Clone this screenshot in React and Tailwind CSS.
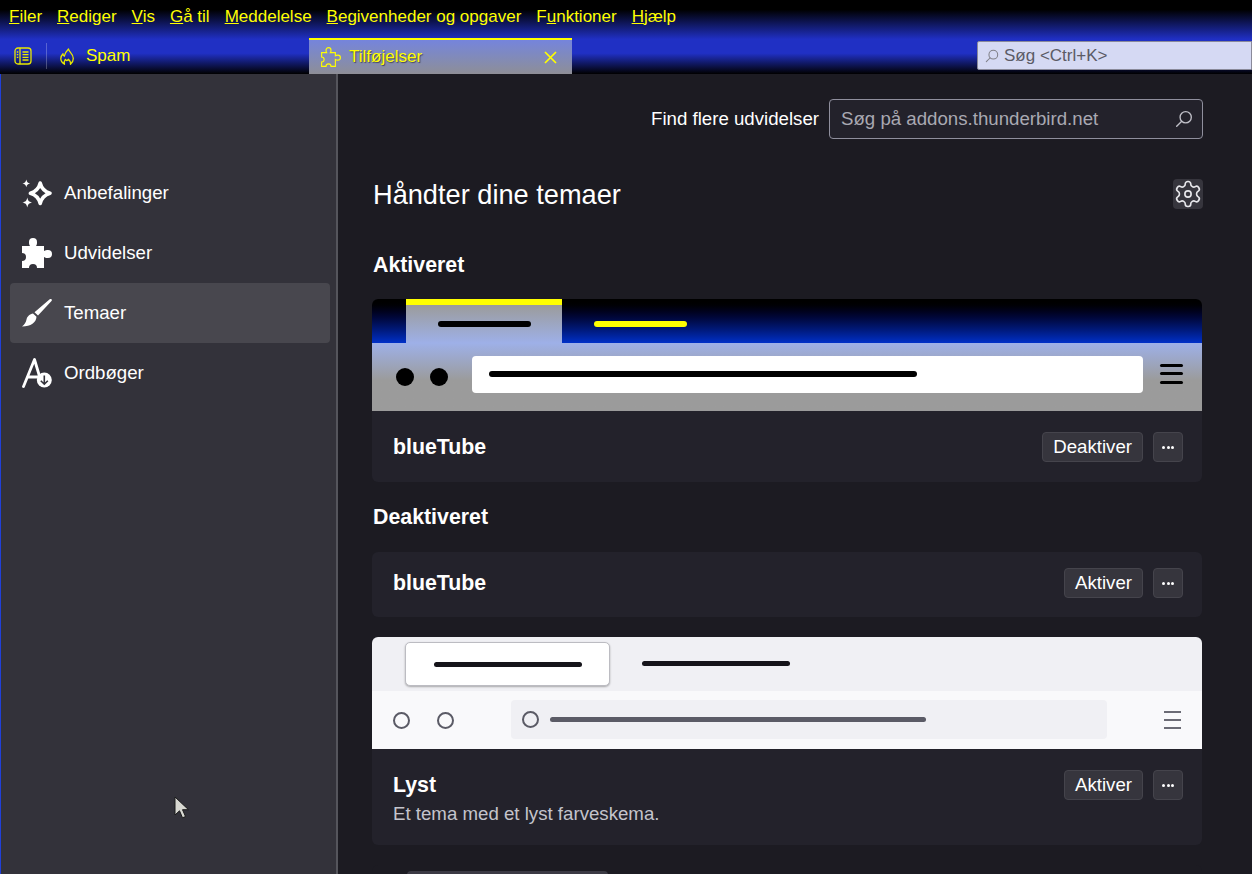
import React from "react";

// shared outline, 30x30 box
const PUZZLE =
  "M0 8H8C7 6.500 7 5.500 7 4A4 4 0 0 1 15 4C15 5.500 15 6.500 14 8H22V13C23.500 12 24.500 12 26 12A4 4 0 0 1 26 20C24.500 20 23.500 20 22 19V30H15A4 4 0 0 0 7 30H0V23A4 4 0 0 0 0 15Z";

const SearchIcon = ({ className }) => (
  <svg viewBox="0 0 16 16" fill="none" stroke="currentColor" strokeWidth="1.200" className={className}>
    <circle cx="9.500" cy="6.500" r="5" />
    <path d="M6 10 1.500 14.500" strokeLinecap="round" />
  </svg>
);

const SidebarToggle = () => (
  <svg viewBox="0 0 18 18" fill="none" stroke="#e8e800" strokeWidth="1.300" className="w-[18px] h-[18px]">
    <rect x="1" y="1" width="16" height="16" rx="3" />
    <path d="M6 1v16M8.500 5h6M8.500 7.700h6M8.500 10.400h6M8.500 13h6M2.800 5h1.500M2.800 7.700h1.500M2.800 10.400h1.500" />
  </svg>
);

const Flame = () => (
  <svg viewBox="0 0 14 18" fill="none" stroke="#e8e800" strokeWidth="1.300" strokeLinejoin="round" className="w-[14px] h-[18px] mt-[2px]">
    <path d="M8.500 1c0 2.500 4.800 4.500 4.800 9.500 0 2.300-.9 4.200-2.800 5.800.4-1.800-.2-3.300-2.200-5-.3 1-.9 1.200-1.500 1.200-.8 0-1.200-.5-1.500-1.200-1 1.300-1.400 3.100-.8 5C2.500 15 .8 13 .8 10.500.8 8 2 6.800 3 5.800c0 1.200.5 2 1.300 2.400C4.800 5.500 6.500 3 8.500 1z" />
  </svg>
);

const Sparkle = () => (
  <svg viewBox="0 0 30 30" className="w-[30px] h-[30px]" fill="none" stroke="white">
    <path
      d="M18.200 5c1.400 5.700 3.900 8.500 9.800 10.200-5.900 1.700-8.400 4.500-9.800 10.300-1.400-5.800-3.900-8.600-9.800-10.300C14.300 13.500 16.800 10.700 18.200 5z"
      strokeWidth="3.500"
      strokeLinejoin="round"
    />
    <path d="M4.300 1.500c.5 2.500 1.300 3.300 3.800 3.900-2.500.6-3.300 1.400-3.800 3.900C3.800 6.800 3 6 .5 5.400 3 4.800 3.800 4 4.300 1.500z" fill="white" stroke="none" />
    <path d="M5.300 19.500c.6 3.200 1.600 4.200 4.900 5-3.300.8-4.300 1.800-4.900 5-.6-3.200-1.600-4.200-4.900-5 3.300-.8 4.300-1.800 4.900-5z" fill="white" stroke="none" />
  </svg>
);

const PuzzleFill = () => (
  <svg viewBox="0 0 30 30" className="w-[30px] h-[30px]" fill="white">
    <path d={PUZZLE} />
  </svg>
);

const Brush = () => (
  <svg viewBox="0 0 30 30" className="w-[30px] h-[30px]" fill="white">
    <path d="M29.500 1.200c.6.500.5 1.300 0 1.900L16 17.500l-3.500-3.300L27.700 1.300c.5-.4 1.300-.5 1.800-.1z" />
    <path d="M11 15.500l3.500 3.300c-.3 5.700-5.500 9.700-14.500 9.700 2.500-1.700 4-4.500 4.500-7 .5-3 3.500-5.500 6.500-6z" />
  </svg>
);

const DictIcon = () => (
  <svg viewBox="0 0 30 30" className="w-[30px] h-[30px]">
    <path d="M1.500 28.500 12.500 1.500 18 20M6 19h11" fill="none" stroke="white" strokeWidth="2.800" strokeLinecap="round" strokeLinejoin="round" />
    <circle cx="22.300" cy="22" r="7.500" fill="white" />
    <path d="M22.300 17.500v8.500M18.800 22.700l3.500 3.500 3.500-3.500" fill="none" stroke="#33323a" strokeWidth="1.600" />
  </svg>
);

const Gear = () => (
  <svg viewBox="0 0 24 24" fill="none" stroke="#e8e8ec" strokeWidth="1.300" className="w-[30px] h-[30px]">
    <path d="M12.220 2h-.440a2 2 0 0 0-2 2v.180a2 2 0 0 1-1 1.730l-.430.250a2 2 0 0 1-2 0l-.150-.080a2 2 0 0 0-2.730.730l-.220.380a2 2 0 0 0 .730 2.730l.150.100a2 2 0 0 1 1 1.720v.510a2 2 0 0 1-1 1.740l-.150.090a2 2 0 0 0-.730 2.730l.220.380a2 2 0 0 0 2.730.730l.150-.080a2 2 0 0 1 2 0l.430.250a2 2 0 0 1 1 1.730V20a2 2 0 0 0 2 2h.440a2 2 0 0 0 2-2v-.180a2 2 0 0 1 1-1.730l.430-.250a2 2 0 0 1 2 0l.150.080a2 2 0 0 0 2.730-.730l.220-.390a2 2 0 0 0-.730-2.730l-.150-.080a2 2 0 0 1-1-1.740v-.500a2 2 0 0 1 1-1.740l.150-.090a2 2 0 0 0 .730-2.730l-.220-.380a2 2 0 0 0-2.730-.730l-.150.080a2 2 0 0 1-2 0l-.430-.250a2 2 0 0 1-1-1.730V4a2 2 0 0 0-2-2z" />
    <circle cx="12" cy="12" r="2.500" />
  </svg>
);

const MENU = [
  ["F", "iler"],
  ["R", "ediger"],
  ["V", "is"],
  ["G", "å til"],
  ["M", "eddelelse"],
  ["B", "egivenheder og opgaver"],
  ["", "F", "u", "nktioner"],
  ["H", "jælp"],
];

const NAV = [
  { label: "Anbefalinger", icon: <Sparkle /> },
  { label: "Udvidelser", icon: <PuzzleFill /> },
  { label: "Temaer", icon: <Brush />, active: true },
  { label: "Ordbøger", icon: <DictIcon /> },
];

const MenuBar = () => (
  <div className="h-[33px] flex items-center pl-[9px] gap-[15px] text-[17px] text-[#ffff00]">
    {MENU.map((m) =>
      m[0] === "" ? (
        <span key="funktioner">
          {m[1]}
          <u>{m[2]}</u>
          {m[3]}
        </span>
      ) : (
        <span key={m[1]}>
          <u>{m[0]}</u>
          {m[1]}
        </span>
      )
    )}
  </div>
);

const TabBar = () => (
  <div className="h-[41px] flex text-[#ffff00] text-[17px]">
    <div className="w-[47px] h-[26px] mt-[10px] flex items-center justify-center pr-[1px] border-r border-[#ffffff40]">
      <SidebarToggle />
    </div>
    <div className="w-[262px] flex items-center pl-[13px] gap-[12px] pt-[4px]">
      <Flame />
      <span>Spam</span>
    </div>
    <div className="w-[263px] h-[36px] mt-[5px] flex items-center pl-[12px] pr-[15px] border-t-2 border-[#ffff00] bg-gradient-to-b from-[#7584dc] to-[#8e8e96]">
      <svg viewBox="-1 -1 32 32" className="w-5 h-5 mr-[8px]" fill="none" stroke="#ffff00" strokeWidth="1.800">
        <path d={PUZZLE} />
      </svg>
      <span className="flex-1 [text-shadow:1px_1px_1px_rgba(0,0,0,0.5)]">Tilføjelser</span>
      <svg viewBox="0 0 13 13" className="w-[13px] h-[13px]" stroke="#ffff00" strokeWidth="1.700">
        <path d="M1 1l11 11M12 1 1 12" />
      </svg>
    </div>
    <div className="flex-1" />
    <div className="w-[275px] h-[29px] mt-[8px] flex items-center pl-[7px] gap-[5px] bg-[#d5d9f3] border border-[#8a8a9a] rounded-l-[2px] text-[#5b5b66]">
      <SearchIcon className="w-[14px] h-[14px] text-[#808088]" />
      <span>Søg &lt;Ctrl+K&gt;</span>
    </div>
  </div>
);

const Sidebar = () => (
  <aside className="w-[338px] shrink-0 h-full bg-[#33323a] border-l border-l-[#2040d8] border-r-2 border-r-[#55555c] pt-[89px] pl-[9px] pr-[6px]">
    <div className="flex flex-col">
      {NAV.map((n) => (
        <div
          key={n.label}
          className={`h-[60px] flex items-center pl-[12px] gap-[12px] rounded-[4px] text-[18.67px] text-white ${
            n.active ? "bg-[#48474e]" : ""
          }`}
        >
          {n.icon}
          <span>{n.label}</span>
        </div>
      ))}
    </div>
  </aside>
);

const CardButton = ({ children }) => (
  <button className="h-[30px] px-[10px] rounded-[4px] bg-[#36353d] border border-[#45444c] text-[18.67px] text-white flex items-center">
    {children}
  </button>
);

const MoreButton = () => (
  <button className="w-[30px] h-[30px] rounded-[4px] bg-[#36353d] border border-[#45444c] flex items-center justify-center gap-[1.500px]">
    <span className="w-[3px] h-[3px] bg-white rounded-full" />
    <span className="w-[3px] h-[3px] bg-white rounded-full" />
    <span className="w-[3px] h-[3px] bg-white rounded-full" />
  </button>
);

const CardRow = ({ name, desc, action, className }) => (
  <div className={`flex justify-between pl-[21px] pr-[19px] ${className}`}>
    <div className={desc ? "pt-[4px]" : ""}>
      <div className="text-[21.33px] font-bold text-white leading-[23px]">{name}</div>
      {desc && <div className="text-[18.67px] text-[#c4c4cc] leading-[25px] mt-[4px]">{desc}</div>}
    </div>
    <div className="flex gap-[10px]">
      <CardButton>{action}</CardButton>
      <MoreButton />
    </div>
  </div>
);

const BlueTubePreview = () => (
  <div className="h-[112px] flex flex-col rounded-t-[6px] overflow-hidden">
    <div className="h-[44px] flex bg-gradient-to-b from-black to-[#0030c8]">
      <div className="ml-[34px] w-[156px] flex items-center justify-center border-t-[6px] border-[#ffff00] bg-gradient-to-b from-[#9b9b9b] to-[#9eb0e8]">
        <div className="w-[93px] h-[6px] rounded-full bg-black" />
      </div>
      <div className="ml-[32px] w-[93px] h-[6px] mt-[22px] rounded-full bg-[#ffff00]" />
    </div>
    <div className="h-[68px] flex items-center pl-[24px] pr-[19px] bg-gradient-to-b from-[#9eb0e8] to-[#9b9b9b] to-[55%]">
      <div className="w-[18px] h-[18px] rounded-full bg-black" />
      <div className="w-[18px] h-[18px] rounded-full bg-black ml-[16px]" />
      <div className="flex-1 h-[37px] ml-[24px] mt-[-6px] rounded-[4px] bg-white flex items-center pl-[17px] pr-[226px]">
        <div className="flex-1 h-[6px] rounded-full bg-black" />
      </div>
      <div className="w-[23px] ml-[17px] flex flex-col gap-[5.500px] mt-[-7px]">
        <div className="h-[3px] bg-black rounded-full" />
        <div className="h-[3px] bg-black rounded-full" />
        <div className="h-[3px] bg-black rounded-full" />
      </div>
    </div>
  </div>
);

const LightPreview = () => (
  <div className="h-[112px] flex flex-col rounded-t-[6px] overflow-hidden">
    <div className="h-[54px] flex bg-[#f0f0f4] pt-[5px]">
      <div className="ml-[33px] w-[205px] h-[44px] flex items-center justify-center rounded-[5px] bg-white border border-[#bcbcc2] shadow-[0_1px_2px_rgba(0,0,0,0.3)]">
        <div className="w-[148px] h-[5px] rounded-full bg-[#15141a]" />
      </div>
      <div className="ml-[32px] mt-[19px] w-[148px] h-[5px] rounded-full bg-[#15141a]" />
    </div>
    <div className="h-[58px] flex items-center pl-[21px] pr-[21px] bg-[#f9f9fb]">
      <div className="w-[17px] h-[17px] rounded-full border-2 border-[#5b5b66]" />
      <div className="w-[17px] h-[17px] rounded-full border-2 border-[#5b5b66] ml-[27px]" />
      <div className="w-[596px] h-[39px] ml-[57px] mt-[-1px] rounded-[4px] bg-[#f0f0f4] flex items-center pl-[11px]">
        <div className="w-[17px] h-[17px] rounded-full border-2 border-[#5b5b66]" />
        <div className="w-[376px] h-[5px] ml-[11px] rounded-full bg-[#5b5b66]" />
      </div>
      <div className="w-[17px] ml-auto flex flex-col gap-[6px]">
        <div className="h-[2px] bg-[#6b6b75]" />
        <div className="h-[2px] bg-[#6b6b75]" />
        <div className="h-[2px] bg-[#6b6b75]" />
      </div>
    </div>
  </div>
);

const Main = () => (
  <main className="flex-1 min-w-0 h-full bg-[#1c1b22] pl-[34px] pr-[49px] pt-[25px] overflow-hidden">
    <div className="flex justify-end items-center gap-[10px]">
      <span className="text-[18.67px] text-white">Find flere udvidelser</span>
      <div className="w-[374px] h-[40px] flex items-center justify-between pl-[11px] pr-[9px] rounded-[4px] border border-[#8f8f9d] bg-[#23222b] text-[18.67px] text-[#a9a9b2]">
        <span>Søg på addons.thunderbird.net</span>
        <SearchIcon className="w-[18px] h-[18px] text-[#c0c0c8]" />
      </div>
    </div>

    <div className="flex justify-between items-center mt-[40px] h-[30px]">
      <h1 className="text-[27.2px] text-white pl-[1px] pt-[2px]">Håndter dine temaer</h1>
      <div className="w-[30px] h-[30px] rounded-[4px] bg-[#36353d] flex items-center justify-center">
        <Gear />
      </div>
    </div>

    <h2 className="text-[21.33px] font-bold text-white leading-[24px] mt-[44px] pl-[1px]">Aktiveret</h2>
    <div className="w-[830px] mt-[22px] rounded-[6px] bg-[#23222b]">
      <BlueTubePreview />
      <CardRow name="blueTube" action="Deaktiver" className="h-[71px] pt-[21px] [&>div:first-child]:pt-[4px]" />
    </div>

    <h2 className="text-[21.33px] font-bold text-white leading-[24px] mt-[23px] pl-[1px]">Deaktiveret</h2>
    <div className="w-[830px] mt-[23px] rounded-[6px] bg-[#23222b]">
      <CardRow name="blueTube" action="Aktiver" className="h-[65px] pt-[16px] [&>div:first-child]:pt-[4px]" />
    </div>
    <div className="w-[830px] mt-[20px] rounded-[6px] bg-[#23222b]">
      <LightPreview />
      <CardRow name="Lyst" desc="Et tema med et lyst farveskema." action="Aktiver" className="h-[96px] pt-[21px]" />
    </div>
    <div className="w-[830px] mt-[20px] h-[60px] rounded-t-[6px] bg-[#1c1b22] pl-[35px] pt-[6px]">
      <div className="w-[201px] h-[44px] rounded-[4px] bg-[#3b3a44]" />
    </div>
  </main>
);

const Cursor = () => (
  <svg viewBox="0 0 16 24" className="absolute left-[173px] top-[796px] w-[16px] h-[24px]">
    <path d="M2 1v18l4.500-4.200 3 7 3-1.300-3-6.800h6z" fill="#d8d8d2" stroke="#1a1a1a" strokeWidth="1" />
  </svg>
);

export default function App() {
  return (
    <div className="relative w-[1252px] h-[874px] overflow-hidden flex flex-col bg-[#1c1b22] font-['Liberation_Sans',Arial,sans-serif]">
      <header className="h-[74px] shrink-0 bg-[linear-gradient(180deg,#000_13%,#2030c4_53%,#2030c4_72%,#000_100%)]">
        <MenuBar />
        <TabBar />
      </header>
      <div className="flex-1 min-h-0 flex">
        <Sidebar />
        <Main />
      </div>
      <Cursor />
    </div>
  );
}
